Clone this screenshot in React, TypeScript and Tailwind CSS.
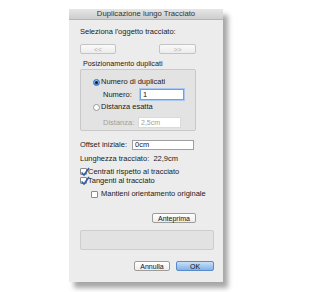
const Radio = ({ on }: { on?: boolean }) => (
  <span
    className={`w-[7px] h-[7px] rounded-full border flex items-center justify-center shrink-0 ${
      on ? 'border-[#3a6fb5] bg-gradient-to-b from-[#9cc4ef] to-[#4d8ad6]' : 'border-[#9a9a9a] bg-white'
    }`}
  >
    {on && <span className="w-[3px] h-[3px] rounded-full bg-[#1b1b1b]" />}
  </span>
);

const Check = ({ on }: { on?: boolean }) => (
  <span className="w-[7px] h-[7px] border border-[#8a8a8a] bg-white rounded-[1px] relative shrink-0">
    {on && (
      <svg className="absolute -left-[1px] -top-[2px]" width="10" height="10" viewBox="0 0 10 10">
        <path d="M1.5 5.5 L4 8 L9 1" fill="none" stroke="#2d5fa8" strokeWidth="1.6" />
      </svg>
    )}
  </span>
);

const Btn = ({ label, w, disabled, primary }: { label: string; w: string; disabled?: boolean; primary?: boolean }) => (
  <div
    className={`${w} h-[10px] rounded-[2px] border flex items-center justify-center text-[7px] leading-none ${
      primary
        ? 'border-[#5b8bcb] bg-gradient-to-b from-[#c9e0f7] to-[#7fb3ea] text-[#111]'
        : disabled
        ? 'border-[#c4c4c4] bg-gradient-to-b from-[#fafafa] to-[#ececec] text-[#b0b0b0]'
        : 'border-[#9c9c9c] bg-gradient-to-b from-white to-[#ededed] text-[#111]'
    }`}
  >
    {label}
  </div>
);

export default function App() {
  return (
    <div className="w-[318px] h-[292px] bg-white overflow-hidden" style={{ fontFamily: '"Liberation Sans", Arial, sans-serif' }}>
      <div className="ml-[69px] mt-[9px] w-[154px] h-[273px] bg-[#ececec] flex flex-col shadow-[5px_6px_5px_rgba(0,0,0,0.35)]">
        {/* barra titolo */}
        <div className="h-[11px] bg-gradient-to-b from-[#e6e6e6] to-[#cdcdcd] border-b border-[#b5b5b5] flex items-center justify-center text-[7.7px] text-[#333] leading-none">
          Duplicazione lungo Tracciato
        </div>

        <div className="pl-[11px] pr-[9px] flex flex-col text-[7.5px] text-[#1a1a1a]">
          <div className="mt-[6px] leading-[12px]">Seleziona l'oggetto tracciato:</div>
          <div className="mt-[6px] flex justify-between pr-[18px]">
            <Btn label="<<" w="w-[36px]" disabled />
            <Btn label=">>" w="w-[37px]" disabled />
          </div>

          <div className="mt-[5px] ml-[3px] leading-[10px] text-[7.2px]">Posizionamento duplicati</div>
          <div className="w-[116px] h-[62px] border border-[#c8c8c8] bg-[#e3e3e3] rounded-[2px] flex flex-col">
            <div className="mt-[6px] ml-[12px] h-[12px] flex items-center gap-[1px]">
              <Radio on />
              <span>Numero di duplicati</span>
            </div>
            <div className="mt-[1px] ml-[22px] h-[11px] flex items-center">
              <span className="w-[37px]">Numero:</span>
              <div className="w-[44px] h-[11px] bg-white border border-[#6d9fe6] shadow-[0_0_0_1px_#a8c8f3] flex items-center pl-[2px] leading-none">
                1
              </div>
            </div>
            <div className="mt-[1px] ml-[12px] h-[12px] flex items-center gap-[1px]">
              <Radio />
              <span>Distanza esatta</span>
            </div>
            <div className="mt-[4px] ml-[22px] h-[11px] flex items-center text-[#a0a0a0]">
              <span className="w-[35px]">Distanza:</span>
              <div className="w-[43px] h-[11px] bg-white border border-[#dadada] flex items-center pl-[2px] leading-none text-[7px]">
                2,5cm
              </div>
            </div>
          </div>

          <div className="mt-[9px] h-[10px] flex items-center">
            <span className="w-[52px]">Offset iniziale:</span>
            <div className="w-[62px] h-[10px] bg-white border border-[#9e9e9e] flex items-center pl-[2px] leading-none">0cm</div>
          </div>
          <div className="mt-[4px] leading-[10px]">Lunghezza tracciato:&nbsp; 22,9cm</div>
          <div className="mt-[3px] h-[9px] flex items-center gap-[1px]">
            <Check on />
            <span>Centrati rispetto al tracciato</span>
          </div>
          <div className="h-[9px] flex items-center gap-[1px]">
            <Check on />
            <span>Tangenti al tracciato</span>
          </div>
          <div className="mt-[4px] ml-[11px] h-[10px] flex items-center gap-[3px]">
            <Check />
            <span>Mantieni orientamento originale</span>
          </div>

          <div className="mt-[14px] flex justify-end pr-[18px]">
            <Btn label="Anteprima" w="w-[44px]" />
          </div>
          <div className="mt-[7px] w-[134px] h-[20px] bg-[#e2e2e2] border border-[#cdcdcd] rounded-[2px]" />
          <div className="mt-[11px] flex justify-end gap-[6px]">
            <Btn label="Annulla" w="w-[36px]" />
            <Btn label="OK" w="w-[38px]" primary />
          </div>
        </div>
      </div>
    </div>
  );
}
